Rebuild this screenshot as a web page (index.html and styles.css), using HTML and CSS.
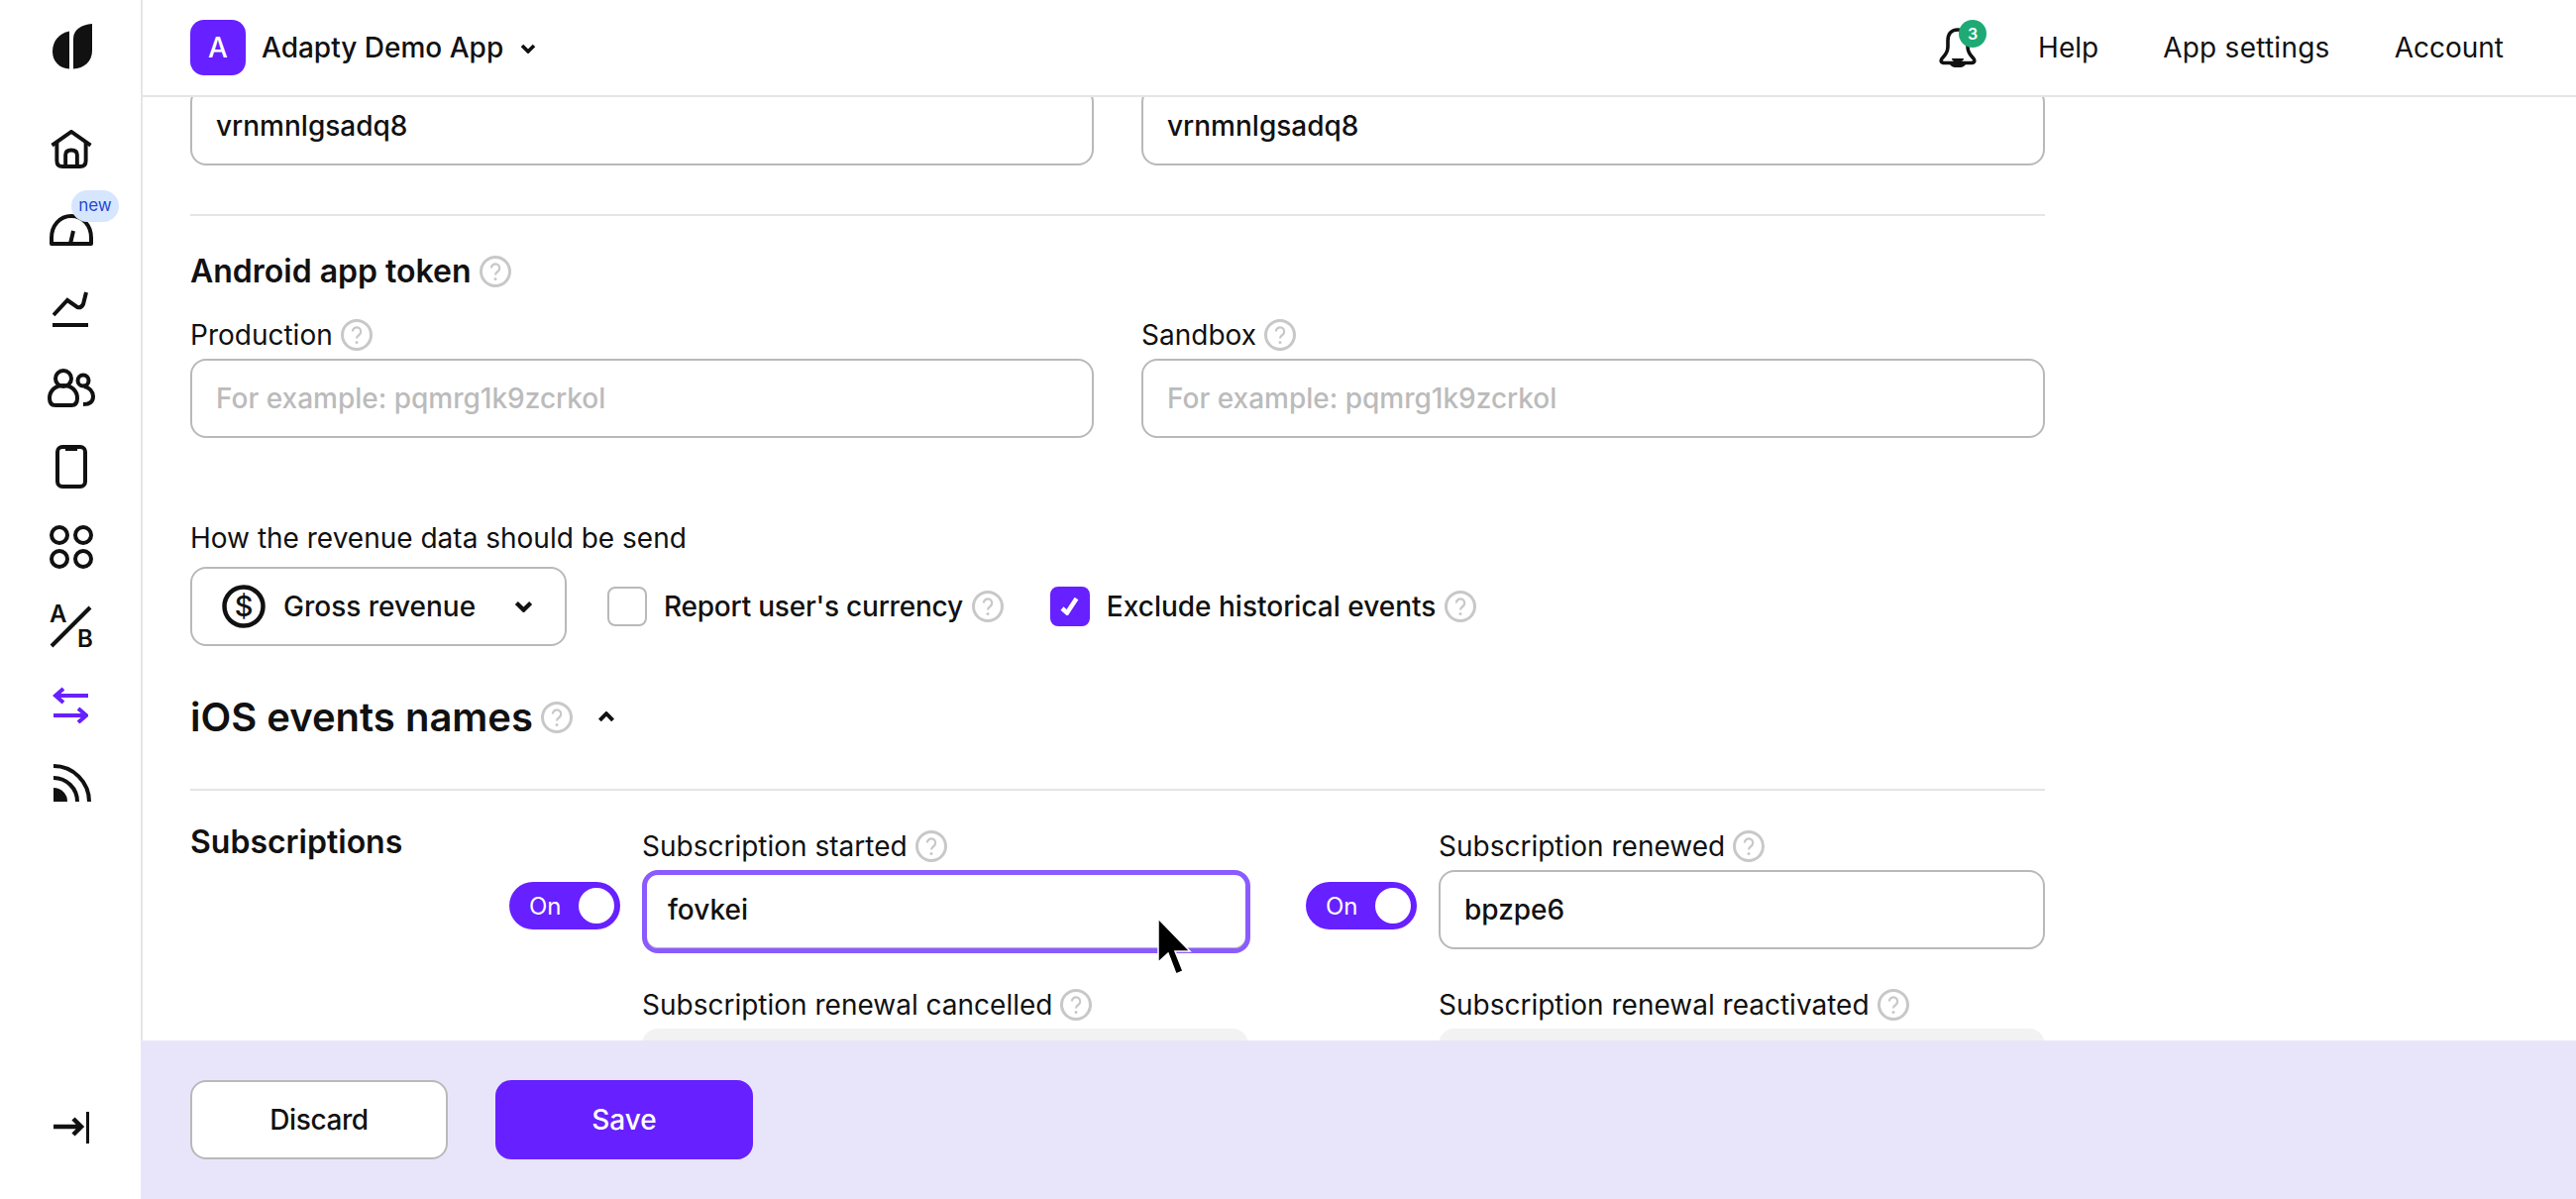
FILE: index.html
```html
<!DOCTYPE html>
<html lang="en">
<head>
<meta charset="utf-8">
<title>Adapty Demo App</title>
<link rel="stylesheet" href="styles.css">
</head>
<body>
<svg class="defs" width="0" height="0" aria-hidden="true">
  <symbol id="help" viewBox="0 0 32 32">
    <circle cx="16" cy="16" r="14.5" fill="none" stroke="#c8c8c8" stroke-width="3"/>
    <path d="M11.8 12.6a4.2 4.2 0 1 1 6.6 3.4c-1.4 1-2.400 1.800-2.400 3.400" fill="none" stroke="#c8c8c8" stroke-width="2.2"/>
    <circle cx="16" cy="23.4" r="1.5" fill="#c8c8c8"/>
  </symbol>
  <symbol id="chev" viewBox="0 0 16 10">
    <path d="M2 2l6 6 6-6" fill="none" stroke="#111" stroke-width="3.6"/>
  </symbol>
</svg>
<div class="shell">
  <aside class="sidebar">
    <svg class="logo" viewBox="0 0 40 46"><path d="M17 7.500V45.500C7 45 0 38 0 28 0 17 7 9.500 17 7.500Z" fill="#111"/><path d="M21 45.500V15C21 6 29 1 40 0V27C40 38 32 45 21 45.500Z" fill="#111"/></svg>
    <nav class="side-nav">
      <svg class="ico ico-home" viewBox="0 0 44 40" fill="none" stroke="#111" stroke-width="4"><path d="M2 16 22 2l20 14"/><path d="M7 13v19c0 4 2 6 6 6h18c4 0 6-2 6-6V13"/><path d="M16 38V26c0-3 2-5 6-5s6 2 6 5v12"/></svg>
      <div class="gauge-wrap">
        <svg class="ico ico-gauge" viewBox="0 0 44 32" fill="none" stroke="#111" stroke-width="4"><path d="M2 30V24C2 12 10 2 22 2s20 10 20 22v6Z" stroke-linejoin="round"/><path d="M21 30l3-13"/></svg>
        <span class="badge-new">new</span>
      </div>
      <svg class="ico ico-chart" viewBox="0 0 36 36" fill="none" stroke="#111" stroke-width="4"><path d="M1 24 15 9l10 7c3 1 5-1 6-3l3-12"/><path d="M0 34h36"/></svg>
      <svg class="ico ico-people" viewBox="0 0 48 40" fill="none" stroke="#111" stroke-width="4"><circle cx="16" cy="10" r="8"/><path d="M2 30c0-8 6-13 14-13s14 5 14 13c0 5-2 7-6 7H8c-4 0-6-2-6-7Z"/><circle cx="36" cy="12" r="5.500"/><path d="M37 18c5 1 9 5 9 10 0 6-4 8-10 8"/></svg>
      <svg class="ico ico-phone" viewBox="0 0 32 44" fill="none" stroke="#111" stroke-width="4"><rect x="2" y="2" width="28" height="40" rx="5"/><path d="M10 3.500h12" stroke-width="5"/></svg>
      <svg class="ico ico-grid" viewBox="0 0 44 44" fill="none" stroke="#111" stroke-width="4"><circle cx="10" cy="10" r="8"/><circle cx="34" cy="10" r="8"/><circle cx="10" cy="34" r="8"/><circle cx="34" cy="34" r="8"/></svg>
      <svg class="ico ico-ab" viewBox="-2 -8 48 60"><text x="0" y="18" class="ab-text">A</text><text x="28" y="43" class="ab-text">B</text><path d="M2 42 41 3" stroke="#111" stroke-width="4" fill="none"/></svg>
      <svg class="ico ico-swap" viewBox="0 0 36 36" fill="none" stroke="#6720ff" stroke-width="4"><path d="M36 9H3M11 2 3 9l8 7"/><path d="M1 29h33M26 22l8 7-8 7"/></svg>
      <svg class="ico ico-rss" viewBox="0 0 38 38" fill="none" stroke="#111" stroke-width="4"><path d="M0 38V24a14 14 0 0 1 14 14Z" fill="#111" stroke="none"/><path d="M0 14a24 24 0 0 1 24 24"/><path d="M0 2a36 36 0 0 1 36 36"/></svg>
    </nav>
    <svg class="collapse" viewBox="0 0 36 32" fill="none" stroke="#111"><path d="M0 15h28M20 7l8 8-8 8" stroke-width="4.500"/><path d="M34.500 0v32" stroke-width="3"/></svg>
  </aside>
  <div class="body-col">
    <header class="topbar">
      <div class="app-switch">
        <span class="app-badge">A</span>
        <span class="app-name">Adapty Demo App</span>
        <svg class="chev-s" viewBox="0 0 16 10"><use href="#chev"/></svg>
      </div>
      <div class="top-nav">
        <div class="bell-wrap">
          <svg class="bell" viewBox="0 0 38 40" fill="none" stroke="#111" stroke-width="3.600"><path d="M19 2C12 2 9 7 9 13v6c0 5-2 8-5 11-3 3-2 5 1 5.500h28c3-.5 4-2.500 1-5.500-3-3-5-6-5-11v-6c0-6-3-11-10-11Z"/><path d="M12 35c1 2.500 4 3.500 7 3.500s6-1 7-3.500"/><path d="M13 31h12c0 2-3 4-6 4s-6-2-6-4Z" fill="#111" stroke="none"/></svg>
          <span class="bell-count">3</span>
        </div>
        <a class="top-link">Help</a>
        <a class="top-link wide">App settings</a>
        <a class="top-link">Account</a>
      </div>
    </header>
    <main class="main">
      <div class="scroll">
        <div class="two-col">
          <div class="input filled">vrnmnlgsadq8</div>
          <div class="input filled">vrnmnlgsadq8</div>
        </div>
        <hr class="rule rule-a">
        <h3 class="h-token">Android app token <svg class="help"><use href="#help"/></svg></h3>
        <div class="two-col token-fields">
          <div class="field">
            <div class="label">Production <svg class="help"><use href="#help"/></svg></div>
            <div class="input placeholder">For example: pqmrg1k9zcrkol</div>
          </div>
          <div class="field">
            <div class="label">Sandbox <svg class="help"><use href="#help"/></svg></div>
            <div class="input placeholder">For example: pqmrg1k9zcrkol</div>
          </div>
        </div>
        <div class="label revenue-label">How the revenue data should be send</div>
        <div class="revenue-row">
          <div class="select">
            <svg class="dollar" viewBox="0 0 44 44"><circle cx="22" cy="22" r="19.500" fill="none" stroke="#111" stroke-width="4.500"/><text x="22" y="32" class="dollar-text">$</text></svg>
            <span class="select-text">Gross revenue</span>
            <svg class="chev-s chev-l" viewBox="0 0 16 10"><use href="#chev"/></svg>
          </div>
          <div class="check-item first-check">
            <span class="box"></span>
            <span class="check-text tight">Report user's currency</span>
            <svg class="help"><use href="#help"/></svg>
          </div>
          <div class="check-item second-check">
            <span class="box on"><svg class="tick" viewBox="0 0 20 18"><path d="M2 11l5 4.500L16.500 1" fill="none" stroke="#fff" stroke-width="4.500"/></svg></span>
            <span class="check-text">Exclude historical events</span>
            <svg class="help"><use href="#help"/></svg>
          </div>
        </div>
        <h2 class="h-ios">iOS events names <svg class="help"><use href="#help"/></svg><svg class="chev-up" viewBox="0 0 16 10"><use href="#chev"/></svg></h2>
        <hr class="rule rule-b">
        <section class="subs">
          <h3 class="h-subs">Subscriptions</h3>
          <div class="pair">
            <div class="toggle"><span>On</span><i></i></div>
            <div class="pair-fields">
              <div class="field">
                <div class="label">Subscription started <svg class="help"><use href="#help"/></svg></div>
                <div class="input filled focused">fovkei</div>
              </div>
              <div class="field next">
                <div class="label">Subscription renewal cancelled <svg class="help"><use href="#help"/></svg></div>
                <div class="input disabled"></div>
              </div>
            </div>
          </div>
          <div class="pair">
            <div class="toggle"><span>On</span><i></i></div>
            <div class="pair-fields">
              <div class="field">
                <div class="label">Subscription renewed <svg class="help"><use href="#help"/></svg></div>
                <div class="input filled">bpzpe6</div>
              </div>
              <div class="field next">
                <div class="label">Subscription renewal reactivated <svg class="help"><use href="#help"/></svg></div>
                <div class="input disabled"></div>
              </div>
            </div>
          </div>
        </section>
      </div>
    </main>
    <footer class="actions">
      <button class="btn ghost">Discard</button>
      <button class="btn primary">Save</button>
    </footer>
  </div>
</div>
<svg class="cursor" viewBox="0 0 36 60"><path d="M2 2v44l10-9 8 21 7-3-8-20h15Z" fill="#000" stroke="#fff" stroke-width="1.500"/></svg>
</body>
</html>
```

FILE: styles.css
```css
* { box-sizing: border-box; }
html, body { margin: 0; height: 100%; }
body {
  position: relative;
  width: 2600px;
  height: 1210px;
  overflow: hidden;
  background: #fff;
  color: #111;
  font-family: Inter, "Liberation Sans", sans-serif;
  font-size: 28px;
}
.defs { position: absolute; }
.shell { display: flex; width: 100%; height: 100%; }

/* Sidebar */
.sidebar {
  width: 142px;
  flex: none;
  display: flex;
  flex-direction: column;
  align-items: center;
  position: relative;
  padding-top: 24px;
}
.logo { width: 40px; height: 46px; margin-left: 3px; display: block; }
.side-nav { display: flex; flex-direction: column; align-items: center; margin-top: 61px; padding-left: 2px; }
.ico { display: block; flex: none; }
.ico-home { width: 44px; height: 39px; }
.gauge-wrap { position: relative; margin-top: 46px; }
.ico-gauge { width: 44px; height: 32px; }
.badge-new {
  position: absolute;
  left: 22px;
  top: -24px;
  width: 48px;
  height: 32px;
  border-radius: 16px;
  background: #d6e6ff;
  color: #2748d0;
  font-size: 17px;
  line-height: 31px;
  text-align: center;
}
.ico-chart { width: 36px; height: 36px; margin-top: 46px; margin-left: -2px; }
.ico-people { width: 48px; height: 40px; margin-top: 42px; }
.ico-phone { width: 32px; height: 44px; margin-top: 37px; }
.ico-grid { width: 44px; height: 44px; margin-top: 37px; }
.ico-ab { width: 48px; height: 60px; margin-top: 28px; margin-bottom: -8px; }
.ab-text { font-family: Inter, sans-serif; font-size: 24px; font-weight: 600; fill: #111; }
.ico-swap { width: 36px; height: 38px; margin-top: 38px; margin-left: -2px; }
.ico-rss { width: 38px; height: 38px; margin-top: 41px; margin-left: 1px; }
.collapse { position: absolute; left: 54px; top: 1122px; width: 36px; height: 32px; }

/* Column */
.body-col { flex: 1; min-width: 0; display: flex; flex-direction: column; }
.topbar {
  height: 98px;
  flex: none;
  border-left: 2px solid #e5e5e5;
  border-bottom: 2px solid #e5e5e5;
  padding: 0 73px 0 48px;
  display: flex;
  align-items: center;
  justify-content: space-between;
  position: relative;
  z-index: 2;
  background: #fff;
}
.app-switch { display: flex; align-items: center; }
.app-badge {
  width: 56px;
  height: 56px;
  border-radius: 14px;
  background: #6720ff;
  color: #fff;
  display: flex;
  align-items: center;
  justify-content: center;
  font-size: 28px;
  font-weight: 500;
}
.app-name { margin-left: 16px; font-weight: 500; }
.chev-s { width: 16px; height: 10px; flex: none; }
.chev-l { width: 19px; height: 12px; }
.app-switch .chev-s { margin-left: 17px; margin-top: 2px; }
.top-nav { display: flex; align-items: center; }
.bell-wrap { position: relative; width: 38px; height: 40px; margin-right: 62px; }
.bell { width: 38px; height: 40px; display: block; }
.bell-count {
  position: absolute;
  left: 20px;
  top: -8px;
  width: 28px;
  height: 28px;
  border-radius: 50%;
  background: #1faa75;
  color: #fff;
  font-size: 16px;
  font-weight: 600;
  line-height: 28px;
  text-align: center;
}
.top-link { margin-right: 65px; }
.top-link:last-child { margin-right: 0; }
.wide { letter-spacing: .25px; }

/* Main */
.main { flex: 1; min-height: 0; overflow: hidden; border-left: 2px solid #e5e5e5; padding: 0 536px 0 48px; }
.scroll { margin-top: -11px; }
.two-col { display: grid; grid-template-columns: 912px 912px; column-gap: 48px; }
.input {
  height: 80px;
  border: 2px solid #b9b9b9;
  border-radius: 16px;
  padding: 0 24px;
  display: flex;
  align-items: center;
  background: #fff;
}
.filled { font-weight: 500; }
.placeholder { color: #bbb; font-weight: 500; }
.disabled { background: #f2f2f2; border-color: #f2f2f2; }
.focused {
  height: 84px;
  width: calc(100% + 2px);
  margin-bottom: -4px;
  border: 5px solid #8a5cff;
  padding: 0 21px 4px;
  box-shadow: inset 0 -1px 0 #b9b9b9;
}
.rule { border: 0; height: 2px; background: #e5e5e5; margin: 0; }
.rule-a { margin-top: 49px; }
.rule-b { margin-top: 48px; }
h2, h3 { margin: 0; font-weight: 600; }
.h-token { margin-top: 36px; font-size: 32px; line-height: 40px; display: flex; align-items: center; gap: 8px; }
.help { width: 32px; height: 32px; flex: none; display: inline-block; }
.token-fields { margin-top: 26px; }
.label { line-height: 36px; margin-bottom: 6px; display: flex; align-items: center; gap: 8px; white-space: nowrap; }
.revenue-label { margin-top: 83px; margin-bottom: 11px; }
.revenue-row { display: flex; align-items: center; }
.select {
  width: 380px;
  height: 80px;
  border: 2px solid #b9b9b9;
  border-radius: 16px;
  display: flex;
  align-items: center;
  padding: 0 32px 0 30px;
}
.dollar { width: 44px; height: 44px; flex: none; }
.dollar-text { font-family: Inter, sans-serif; font-size: 29px; font-weight: 500; fill: #111; text-anchor: middle; }
.select-text { margin-left: 18px; flex: 1; font-weight: 500; }
.check-item { display: flex; align-items: center; }
.first-check { margin-left: 41px; }
.second-check { margin-left: 47px; }
.box {
  width: 40px;
  height: 40px;
  border: 2px solid #b9b9b9;
  border-radius: 8px;
  display: flex;
  align-items: center;
  justify-content: center;
  flex: none;
}
.box.on { background: #6720ff; border-color: #6720ff; }
.tick { width: 20px; height: 18px; }
.check-text { margin: 0 9px 0 17px; font-weight: 500; }
.tight { letter-spacing: -.22px; }
.h-ios { margin-top: 48px; font-size: 40px; line-height: 48px; display: flex; align-items: center; gap: 8px; }
.chev-up { width: 18px; height: 11px; transform: rotate(180deg); margin-left: 17px; margin-top: -2px; }
.subs { margin-top: 38px; display: flex; }
.h-subs { font-size: 32px; line-height: 28px; width: 322px; flex: none; }
.pair { width: 746px; flex: none; display: flex; gap: 22px; }
.pair + .pair { margin-left: 58px; }
.pair-fields { width: 612px; flex: none; }
.next { margin-top: 38px; }
.toggle {
  width: 112px;
  height: 48px;
  margin-top: 54px;
  border-radius: 24px;
  background: #6720ff;
  color: #fff;
  font-size: 24px;
  display: flex;
  align-items: center;
  justify-content: space-between;
  padding: 0 6px 0 20px;
  flex: none;
}
.toggle i { width: 36px; height: 36px; border-radius: 50%; background: #fff; display: block; }

/* Footer */
.actions {
  height: 160px;
  flex: none;
  background: #e8e5fb;
  padding: 40px 0 0 50px;
  display: flex;
  gap: 48px;
  position: relative;
  z-index: 2;
}
.btn {
  width: 260px;
  height: 80px;
  border-radius: 16px;
  font: 500 28px Inter, sans-serif;
  cursor: pointer;
}
.ghost { background: #fff; border: 2px solid #b9b9b9; color: #111; letter-spacing: -.4px; }
.primary { background: #6720ff; border: 0; color: #fff; }
.cursor { position: absolute; left: 1167px; top: 925px; width: 36px; height: 60px; z-index: 5; }
```
